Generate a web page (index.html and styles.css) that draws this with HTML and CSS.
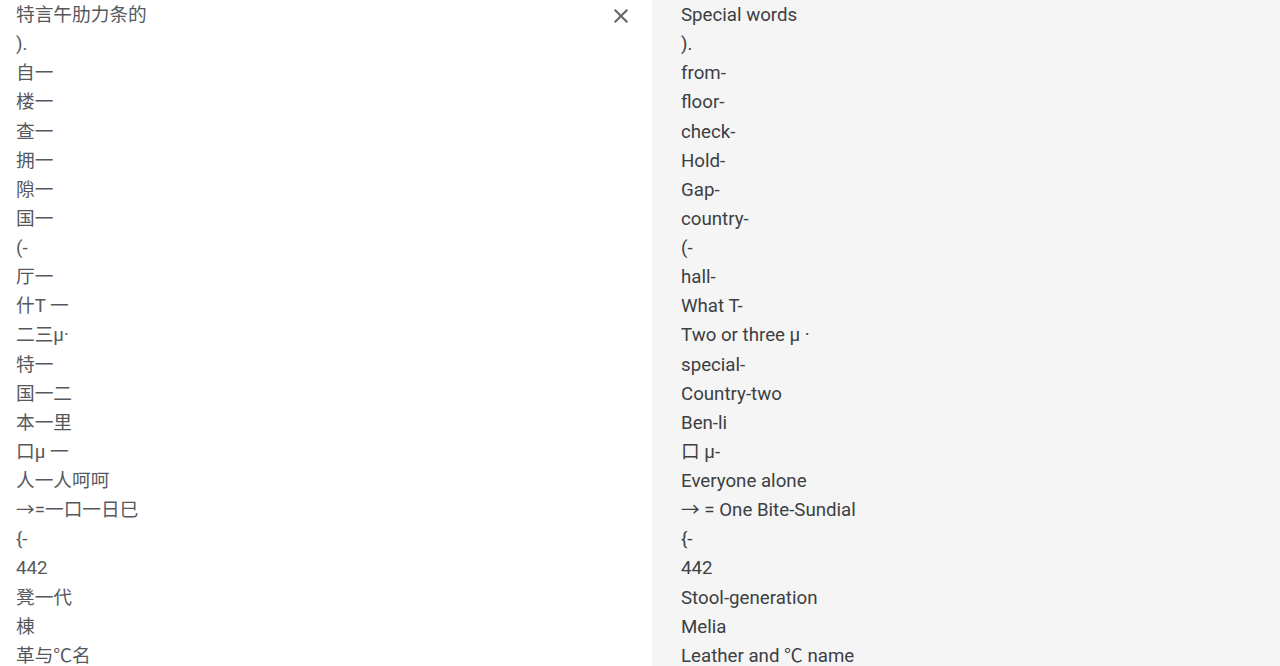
FILE: index.html
```html
<!DOCTYPE html>
<html lang="zh">
<head>
  <meta charset="UTF-8">
  <meta name="viewport" content="width=device-width, initial-scale=1.0">
  <title>Translate document</title>
  <link rel="stylesheet" href="styles.css">
</head>
<body>

<div id="doc-view">
  <div id="source-pane">
    <div class="line-list source-text">
      <div class="line">特言午肋力条的</div>
      <div class="line">).</div>
      <div class="line">自一</div>
      <div class="line">楼一</div>
      <div class="line">查一</div>
      <div class="line">拥一</div>
      <div class="line">隙一</div>
      <div class="line">国一</div>
      <div class="line">(-</div>
      <div class="line">厅一</div>
      <div class="line">什T 一</div>
      <div class="line">二三μ·</div>
      <div class="line">特一</div>
      <div class="line">国一二</div>
      <div class="line">本一里</div>
      <div class="line">口μ 一</div>
      <div class="line">人一人呵呵</div>
      <div class="line">→=一口一日巳</div>
      <div class="line">{-</div>
      <div class="line">442</div>
      <div class="line">凳一代</div>
      <div class="line">棟</div>
      <div class="line">革与℃名</div>
    </div>
    <button id="close-button" title="Close">
      <svg width="24" height="24" viewBox="0 0 24 24"><path d="M19 6.41L17.59 5 12 10.59 6.41 5 5 6.41 10.59 12 5 17.59 6.41 19 12 13.41 17.59 19 19 17.59 13.41 12z"/></svg>
    </button>
  </div>

  <div id="target-pane">
    <div class="line-list">
      <div class="line">Special words</div>
      <div class="line">).</div>
      <div class="line">from-</div>
      <div class="line">floor-</div>
      <div class="line">check-</div>
      <div class="line">Hold-</div>
      <div class="line">Gap-</div>
      <div class="line">country-</div>
      <div class="line">(-</div>
      <div class="line">hall-</div>
      <div class="line">What T-</div>
      <div class="line">Two or three μ ·</div>
      <div class="line">special-</div>
      <div class="line">Country-two</div>
      <div class="line">Ben-li</div>
      <div class="line">口 μ-</div>
      <div class="line">Everyone alone</div>
      <div class="line">→ = One Bite-Sundial</div>
      <div class="line">{-</div>
      <div class="line">442</div>
      <div class="line">Stool-generation</div>
      <div class="line">Melia</div>
      <div class="line">Leather and ℃ name</div>
    </div>
  </div>
</div>

</body>
</html>
```

FILE: styles.css
```css
body {
    margin: 0;
    padding: 0;
    background: #fff;
    color: #3c4043;
    font-family: Roboto, "Noto Sans CJK SC", sans-serif;
    font-size: 18.7px;
    height: 666px;
    overflow: hidden;
}

#doc-view {
    display: flex;
    height: 666px;
}

#source-pane {
    width: 652px;
    display: flex;
    align-items: flex-start;
    padding: 1px 16px 0 16px;
    box-sizing: border-box;
    background: #fff;
}

#target-pane {
    flex: 1;
    background: #f5f5f5;
    padding: 1px 0 0 29px;
}

.line-list {
    flex: 1;
}

.line {
    height: 29.14px;
    line-height: 29.14px;
    white-space: nowrap;
}

.source-text {
    color: #55595e;
}

#close-button {
    width: 30px;
    height: 29px;
    padding: 0;
    border: none;
    background: none;
    cursor: pointer;
    display: flex;
    align-items: center;
    justify-content: center;
}

#close-button svg {
    fill: #5f6368;
}
```
